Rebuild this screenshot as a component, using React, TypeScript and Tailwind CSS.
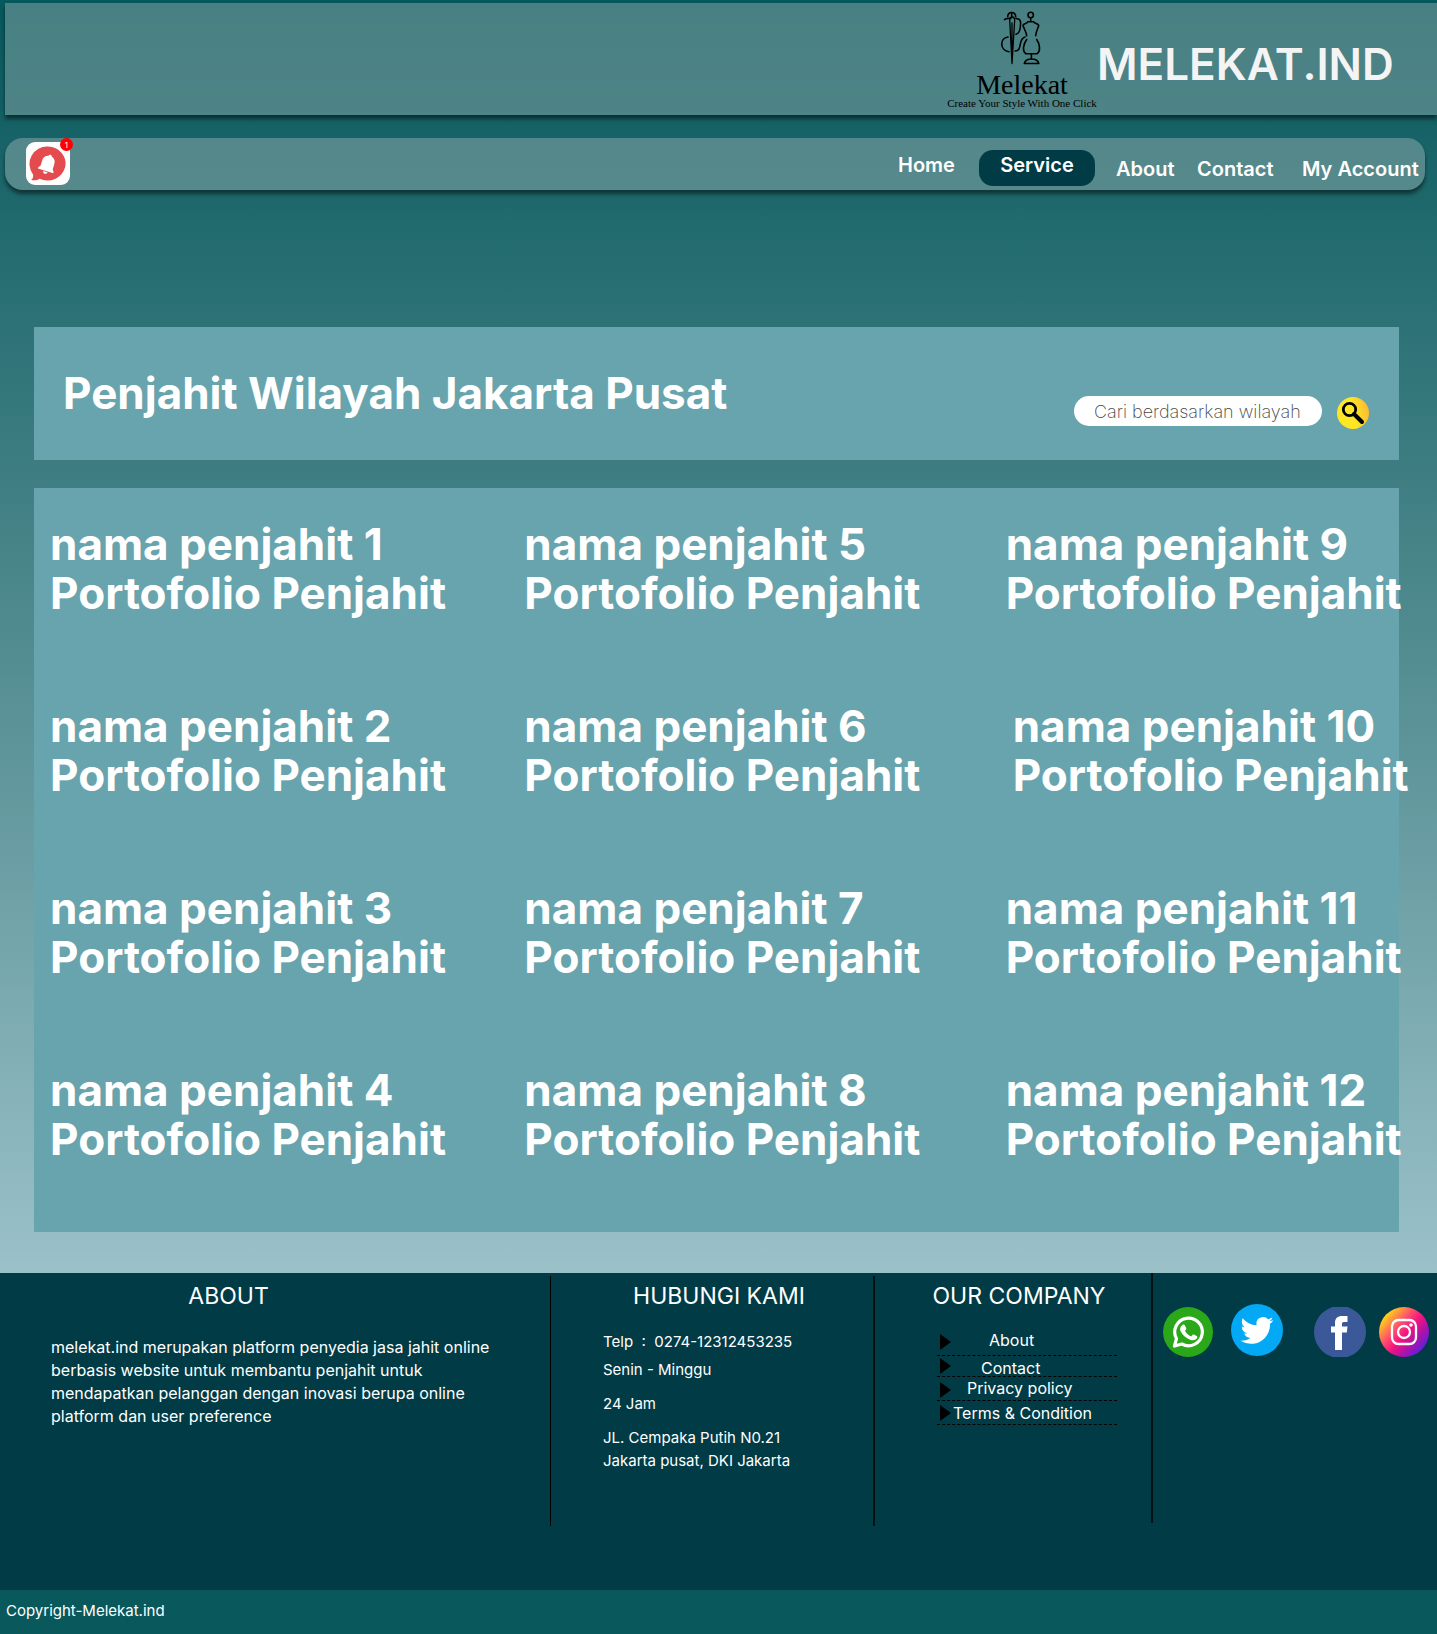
import React from "react";

const tailors = Array.from({ length: 12 }, (_, i) => i + 1);

function BrandLogo() {
  return (
    <div className="flex w-[150px] flex-col items-center whitespace-nowrap font-['Liberation_Serif',serif] text-black">
      <svg className="h-14 w-11" viewBox="-3 0 44 56" fill="none" stroke="black" strokeWidth="1.6" strokeLinecap="round" strokeLinejoin="round" aria-hidden="true">
        <path d="M4.700 7.700C5 2 12.400 2 12.700 7.700" />
        <path d="M1.500 10.600C4 8.500 6 10.500 8.700 8.500V4.500" />
        <path d="M6.700 11L9 54.500 11.700 11C11.500 7 7 7 6.700 11zM9 14v26" strokeWidth="1.300" />
        <path d="M13 9.500C19 9.500 17.500 15 17.300 18S16 24.500 13 25.300" />
        <path d="M5 28C-3.500 29-3.500 41.500 6 42.700" />
        <path d="M12 42C20 42 14.500 30 22 28" />
        <circle cx="27.700" cy="6" r="2.700" />
        <path d="M27.700 9v3.700M24.700 12.700h6M24.700 12.700C24.500 15 20.500 14 20 16.500 21 20 23 22 23.700 26.700M30.700 12.700c.3 2.300 4.500 1.300 5 3.800-1 3.500-2.500 5.500-3 10.200" />
        <path d="M23.700 30.500c-3.500 4.500-4.500 11.500-1 14.200h11.600c3.500-2.700 2.500-9.700-.6-14.200M28.400 45v5M21.300 54.500c1.500-6 13-6 14.500 0z" />
      </svg>
      <span className="mt-2 text-[28px] leading-6">Melekat</span>
      <span className="text-[11px] leading-3">Create Your Style With One Click</span>
    </div>
  );
}

function BellIcon() {
  return (
    <svg className="size-11" viewBox="0 0 44 44" aria-hidden="true">
      <rect width="44" height="43" rx="9" fill="white" />
      <path d="M22 4.500a18 17 0 1 1-8.500 32.200c-2 1.500-5 2-8.500 1.300 2-1.500 2.500-3.500 2-5.500A17.500 17.500 0 0 1 22 4.500z" fill="#e44b4f" />
      <g transform="rotate(17 22 21)" fill="white">
        <path d="M22 12.500c1 0 1.500.5 1.600 1.300 3.200.8 4.700 3 4.700 6.200v5.500l1.700 2.500v1.200H14V28l1.700-2.500V20c0-3.200 1.500-5.400 4.700-6.200.1-.8.6-1.300 1.600-1.300z" />
        <path d="M19.700 30h4.600c-.3 1.500-1.100 2.200-2.300 2.200s-2-.7-2.300-2.200z" />
      </g>
    </svg>
  );
}

function WhatsappIcon() {
  return (
    <svg className="size-[50px]" viewBox="0 0 50 50" aria-hidden="true">
      <circle cx="25" cy="25" r="25" fill="#2aa81a" />
      <path d="M11.500 39l2-7.300A13.800 13.800 0 1 1 18.800 37z" fill="none" stroke="white" strokeWidth="3.200" strokeLinejoin="round" />
      <path d="M19.500 18c1-.8 2-.6 2.500.5l1.200 2.800c.3.700 0 1.200-1.200 2.700 1.500 2.700 3.500 4.400 6.200 5.400 1.600-2 1.800-2.200 2.600-1.900l2.900 1.400c.9.500.7 1.700 0 2.700-1.200 1.600-3.700 2.100-6 1.300-4.500-1.500-7.500-4-10-8.300-1.300-2.500-.4-5.200 1.800-6.600z" fill="white" />
    </svg>
  );
}

function TwitterIcon() {
  return (
    <svg className="size-[52px]" viewBox="0 0 52 52" aria-hidden="true">
      <circle cx="26" cy="26" r="26" fill="#03a9f4" />
      <path transform="translate(9.500 10) scale(1.370)" fill="white" d="M23.953 4.570a10 10 0 01-2.825.775 4.958 4.958 0 002.163-2.723c-.951.555-2.005.959-3.127 1.184a4.920 4.920 0 00-8.384 4.482C7.690 8.095 4.067 6.130 1.640 3.162a4.822 4.822 0 00-.666 2.475c0 1.710.870 3.213 2.188 4.096a4.904 4.904 0 01-2.228-.616v.060a4.923 4.923 0 003.946 4.827 4.996 4.996 0 01-2.212.085 4.936 4.936 0 004.604 3.417 9.867 9.867 0 01-6.102 2.105c-.390 0-.779-.023-1.170-.067a13.995 13.995 0 007.557 2.209c9.053 0 13.998-7.496 13.998-13.985 0-.210 0-.420-.015-.630A9.935 9.935 0 0024 4.590z" />
    </svg>
  );
}

function FacebookIcon() {
  return (
    <svg className="h-[50px] w-[52px]" viewBox="0 0 52 50" aria-hidden="true">
      <circle cx="26" cy="25" r="26" fill="#3b5998" />
      <path d="M21 43V25.500h-4v-6h4v-3.700C21 11.500 23.500 9 28 9h5.500v6H30c-1.600 0-2 .7-2 2v2.500h5.500l-.7 6H28V43z" fill="white" />
    </svg>
  );
}

function InstagramIcon() {
  return (
    <svg className="size-[50px]" viewBox="0 0 50 50" aria-hidden="true">
      <defs>
        <linearGradient id="insta" x1="0.100" y1="0.150" x2="0.900" y2="0.850">
          <stop offset="0" stopColor="#ffe011" />
          <stop offset="0.350" stopColor="#ff4d6d" />
          <stop offset="0.550" stopColor="#f0147f" />
          <stop offset="0.750" stopColor="#b012a8" />
          <stop offset="1" stopColor="#5a1fe0" />
        </linearGradient>
      </defs>
      <circle cx="25" cy="25" r="25" fill="url(#insta)" />
      <g fill="none" stroke="white" strokeWidth="2.300">
        <rect x="13" y="13" width="24" height="24" rx="6.500" />
        <circle cx="25" cy="25" r="6" />
      </g>
      <circle cx="32" cy="18" r="1.800" fill="white" />
    </svg>
  );
}

function FooterHeading({ children }: { children: React.ReactNode }) {
  return <h2 className="text-center text-[23px] leading-8">{children}</h2>;
}

function CompanyLink({ label, row, link }: { label: string; row: string; link: string }) {
  return (
    <li className={`flex border-b border-dashed border-black ${row}`}>
      <svg className="ml-[3px] h-4 w-3 shrink-0" viewBox="0 0 12 16" aria-hidden="true">
        <path d="M0 0L11 8L0 16z" fill="black" />
      </svg>
      <a href="#" className={`whitespace-nowrap text-base leading-5 ${link}`}>{label}</a>
    </li>
  );
}

export default function App() {
  return (
    <div className="bg-[linear-gradient(180deg,#07585c_0%,#458387_33%,#9bc1c9_78%)] font-[Inter,sans-serif] text-white">
      <div className="pt-[3px] pl-[5px]">
        <header className="flex h-28 items-start justify-end bg-[#759b9c]/60 pr-[38px] shadow-[0_4px_4px_rgba(0,0,0,0.5)]">
          <div className="pt-[6px]">
            <BrandLogo />
          </div>
          <h1 className="w-[302px] pt-9 text-[44px] leading-[50px] font-semibold whitespace-nowrap text-[#f4f4f4]">MELEKAT.IND</h1>
        </header>
      </div>

      <nav className="mt-[23px] mr-3 ml-[5px] flex h-[52px] justify-between rounded-[18px] bg-[#7da0a1]/60 text-xl leading-[30px] font-semibold shadow-[0_4px_4px_rgba(0,0,0,0.5)]">
        <button type="button" aria-label="Notifications" className="relative mt-1 ml-[21px] size-11">
          <BellIcon />
          <span className="absolute -top-1 -right-[3px] flex size-[13px] items-center justify-center rounded-full bg-[#ff0000] text-[8px] leading-3 font-normal">1</span>
        </button>
        <div className="flex whitespace-nowrap">
          <a href="#" className="w-[81px] pt-3">Home</a>
          <a href="#" aria-current="page" className="mt-3 mr-[21px] h-9 w-[116px] rounded-[14px] bg-[#003b46] text-center">Service</a>
          <a href="#" className="w-[81px] pt-4">About</a>
          <a href="#" className="w-[105px] pt-4">Contact</a>
          <a href="#" className="w-[123px] pt-4">My Account</a>
        </div>
      </nav>

      <main className="pt-[137px] pr-[38px] pb-[41px] pl-[34px]">
        <section className="flex h-[133px] items-start justify-between bg-[#68a4ae] pr-[30px] pl-[29px]">
          <h2 className="pt-[42px] text-[44px] leading-[49px] font-bold whitespace-nowrap">Penjahit Wilayah Jakarta Pusat</h2>
          <form className="flex gap-[15px] pt-[69px]" onSubmit={(e) => e.preventDefault()}>
            <input
              type="text"
              aria-label="Cari berdasarkan wilayah"
              placeholder="Cari berdasarkan wilayah"
              className="h-[30px] w-[248px] rounded-full bg-white pr-2 pl-5 text-lg font-extralight text-black outline-none placeholder:text-[#444]"
            />
            <button type="submit" aria-label="Cari" className="mt-px size-8">
              <svg viewBox="0 0 32 32" aria-hidden="true">
                <defs>
                  <linearGradient id="gold" x1="0" y1="0.600" x2="1" y2="0.400">
                    <stop offset="0.500" stopColor="#fde725" />
                    <stop offset="1" stopColor="#fdb932" />
                  </linearGradient>
                </defs>
                <circle cx="16" cy="16" r="16" fill="url(#gold)" />
                <g fill="none" stroke="black">
                  <circle cx="12.500" cy="12.500" r="6.200" strokeWidth="2.800" />
                  <path d="M17 17l8 8" strokeWidth="4" strokeLinecap="round" />
                </g>
              </svg>
            </button>
          </form>
        </section>

        <section className="mt-7 grid h-[744px] grid-flow-col grid-cols-[minmax(0,474fr)_minmax(0,481fr)_minmax(0,393fr)] grid-rows-[repeat(4,182px)] bg-[#68a4ae] pt-8 pl-4">
          {tailors.map((n) => (
            <article key={n} className={n === 10 ? "pl-[7px]" : ""}>
              <h3 className="text-[44px] leading-[49px] font-bold whitespace-nowrap">nama penjahit {n}</h3>
              <a href="#" className="block text-[44px] leading-[49px] font-bold whitespace-nowrap">Portofolio Penjahit</a>
            </article>
          ))}
        </section>
      </main>

      <footer>
        <div className="grid h-[317px] grid-cols-[551fr_324fr_278fr_284fr] bg-[#003b46] text-[15px]">
          <section className="mt-[3px] h-[250px] border-r border-black pt-1 pl-[51px]">
            <div className="mr-36">
              <FooterHeading>ABOUT</FooterHeading>
            </div>
            <p className="mt-6 text-base leading-[23px] whitespace-nowrap">
              melekat.ind merupakan platform penyedia jasa jahit online<br />
              berbasis website untuk membantu penjahit untuk<br />
              mendapatkan pelanggan dengan inovasi berupa online<br />
              platform dan user preference
            </p>
          </section>
          <section className="mt-[3px] h-[250px] border-r-2 border-black/70 pt-1">
            <div className="pl-[14px]">
              <FooterHeading>HUBUNGI KAMI</FooterHeading>
            </div>
            <address className="mt-[18px] pl-[52px] leading-[23px] whitespace-nowrap not-italic">
              <p className="whitespace-pre">Telp  :  0274-12312453235</p>
              <p className="mt-[5px]">Senin - Minggu</p>
              <p className="mt-[11px]">24 Jam</p>
              <p className="mt-[11px]">JL. Cempaka Putih N0.21</p>
              <p>Jakarta pusat, DKI Jakarta</p>
            </address>
          </section>
          <section className="h-[250px] border-r-2 border-black/70 pt-[7px] pl-[62px]">
            <div className="-ml-2 w-[180px] whitespace-nowrap">
              <FooterHeading>OUR COMPANY</FooterHeading>
            </div>
            <ul className="mt-[22px] w-[180px]">
              <CompanyLink label="About" row="h-[22px]" link="ml-[37px] -mt-1" />
              <CompanyLink label="Contact" row="h-[21px] pt-[2px]" link="ml-[29px]" />
              <CompanyLink label="Privacy policy" row="h-6 pt-[5px]" link="ml-[15px] -mt-1" />
              <CompanyLink label="Terms & Condition" row="h-6 pt-1" link="ml-px -mt-[2px]" />
            </ul>
          </section>
          <section className="flex items-start pt-[34px] pl-[10px]" aria-label="Social media">
            <a href="#" aria-label="WhatsApp" className="mr-[18px] shrink-0"><WhatsappIcon /></a>
            <a href="#" aria-label="Twitter" className="-mt-[3px] mr-[31px] shrink-0"><TwitterIcon /></a>
            <a href="#" aria-label="Facebook" className="mr-[13px] shrink-0"><FacebookIcon /></a>
            <a href="#" aria-label="Instagram" className="shrink-0"><InstagramIcon /></a>
          </section>
        </div>
        <p className="h-11 bg-[#09585c] pt-[11px] pl-[6px] text-[15px] leading-5">Copyright-Melekat.ind</p>
      </footer>
    </div>
  );
}
